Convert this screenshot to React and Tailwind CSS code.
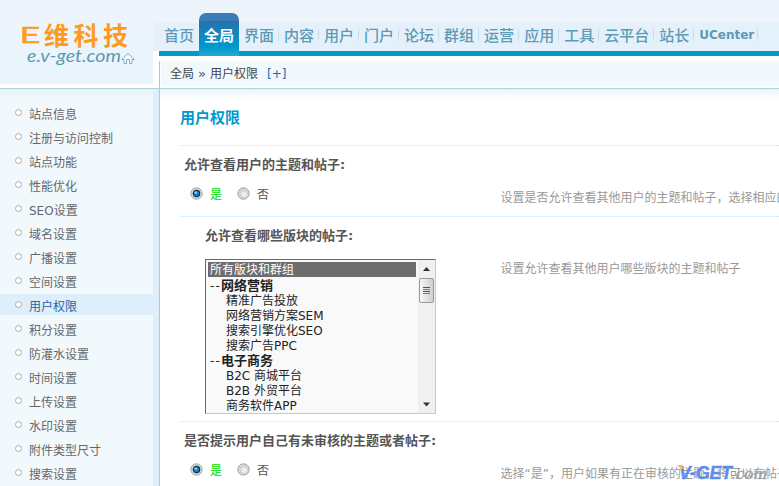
import React from 'react';

const NAV = ['首页', '全局', '界面', '内容', '用户', '门户', '论坛', '群组', '运营', '应用', '工具', '云平台', '站长'];

const MENU = [
  '站点信息', '注册与访问控制', '站点功能', '性能优化', 'SEO设置', '域名设置', '广播设置', '空间设置',
  '用户权限', '积分设置', '防灌水设置', '时间设置', '上传设置', '水印设置', '附件类型尺寸', '搜索设置',
];

const FORUMS = [
  { group: '网络营销' },
  { name: '精准广告投放' },
  { name: '网络营销方案SEM' },
  { name: '搜索引擎优化SEO' },
  { name: '搜索广告PPC' },
  { group: '电子商务' },
  { name: 'B2C 商城平台' },
  { name: 'B2B 外贸平台' },
  { name: '商务软件APP' },
];

function Logo() {
  return (
    <svg className="block h-[61px] w-[153px] overflow-visible" viewBox="0 0 153 61">
      <g fill="#ff9a1f" fontFamily="'Noto Sans CJK SC', sans-serif">
        <text transform="translate(19 20) scale(1.7 1)" fontSize="22" fontWeight="400" stroke="#ff9a1f" strokeWidth="0.4">E</text>
        <text x="44" y="22" fontSize="25" fontWeight="700" textLength="84" lengthAdjust="spacing">维科技</text>
      </g>
      <text x="27" y="38.5" fontSize="17" fontStyle="italic" fill="#5a9ab0" textLength="94" lengthAdjust="spacingAndGlyphs" fontFamily="Lato, sans-serif">e.v-get.com</text>
      <path d="M121.500 36.500 L128 30.500 L134.500 36.500 H132 V40.500 H129.500 V36.500 H126.500 V40.500 H124 V36.500 Z" fill="#f4fafd" stroke="#7fafc2" strokeWidth="1" />
    </svg>
  );
}

function Radio({ checked }) {
  return (
    <svg className="block size-[13px]" viewBox="0 0 13 13">
      <circle cx="6.5" cy="6.5" r="5.6" fill="#f4f4f4" stroke="#8e8f8f" strokeWidth="1" />
      <circle cx="6.5" cy="6.5" r="4" fill="#d9dbdd" stroke="#b9bcc0" strokeWidth="0.7" />
      {checked ? (
        <>
          <circle cx="6.5" cy="6.5" r="3.2" fill="#1580bd" stroke="#0d2f4c" strokeWidth="1.1" />
          <circle cx="5.8" cy="5.6" r="1.2" fill="#8bdcfa" />
        </>
      ) : (
        <circle cx="7.2" cy="7.3" r="2.6" fill="#eeeeee" />
      )}
    </svg>
  );
}

function YesNo() {
  return (
    <div className="flex h-4 items-start pl-[9px] leading-4">
      <Radio checked />
      <span className="ml-[7px] w-[27px] text-[#00dd00]">是</span>
      <Radio />
      <span className="ml-[7px]">否</span>
    </div>
  );
}

function ForumSelect() {
  return (
    <div className="ml-[25px] flex h-[155px] w-[231px] border border-t-[#696969] border-l-[#696969] border-r-[#c8c8c8] border-b-[#c8c8c8] bg-[#f9f9f9] text-[#222]">
      <div className="w-[212px] overflow-hidden pt-[2px] pl-[2px] leading-[18px]">
        <div className="h-[15px] w-[208px] bg-[#6d6d6d] pl-[2px] leading-[17px] text-white">所有版块和群组</div>
        {FORUMS.map((f) =>
          f.group ? (
            <div key={f.group} className="flex h-[15px] pl-[2px]">
              <span className="w-[11px] tracking-[1.2px] whitespace-nowrap">--</span>
              <b className="text-[13px] leading-[17px]">{f.group}</b>
            </div>
          ) : (
            <div key={f.name} className="h-[15px] pl-[18px] whitespace-pre">{f.name}</div>
          )
        )}
      </div>
      <div className="flex w-[17px] flex-col items-center bg-[#f0f0f0]">
        <svg className="h-[18px] w-[17px] shrink-0" viewBox="0 0 17 18"><path d="M5 11 L8.5 7 L12 11 Z" fill="#333" /></svg>
        <div className="flex h-[25px] w-[15px] shrink-0 flex-col items-center justify-center gap-px rounded-[2px] border border-[#999] bg-linear-to-r from-[#f8f8f8] to-[#cfcfd2]">
          <i className="h-px w-[7px] bg-[#555]" />
          <i className="h-px w-[7px] bg-[#777]" />
          <i className="h-px w-[7px] bg-[#555]" />
          <i className="h-px w-[7px] bg-[#777]" />
        </div>
        <svg className="mt-auto h-[17px] w-[17px] shrink-0" viewBox="0 0 17 17"><path d="M5 6.5 L12 6.5 L8.5 10.5 Z" fill="#333" /></svg>
      </div>
    </div>
  );
}

function Heading({ children, className }) {
  return <h3 className={`text-[13px] font-bold leading-[18px] whitespace-nowrap ${className}`}>{children}</h3>;
}

function Dots() {
  return <div className="h-px w-full bg-[repeating-linear-gradient(90deg,#cfe8f7_0_1px,#f4fafd_1px_2px)]" />;
}

export default function App() {
  return (
    <div className="relative h-[486px] w-[779px] overflow-hidden bg-white font-['DejaVu_Sans','Noto_Sans_CJK_SC',sans-serif] text-[12px] text-[#555]">
      <header className="flex h-[88px] flex-col">
        <div className="h-[23px] shrink-0 bg-[#edf4fc]" />
        <div className="flex h-[65px]">
          <div className="h-[61px] w-[153px] shrink-0 bg-linear-to-b from-[#edf5fc] to-[#e9f4fb]">
            <Logo />
          </div>
          <div className="flex w-[626px] flex-col">
            <nav className="flex h-[28px] shrink-0 bg-[#e5f1fa] pl-[6px]">
              {NAV.map((n) =>
                n === '全局' ? (
                  <div key={n} className="-mt-[10px] h-[43px] w-10 shrink-0 rounded-t-[7px] bg-[linear-gradient(#3b7cb7_0,#3b7cb7_8px,#2372b0_8px,#0099cc_34px,#2ba6d3_43px)] pt-[11px] pl-[5px] text-[15px] font-bold leading-[24px] whitespace-nowrap text-white">
                    {n}
                  </div>
                ) : (
                  <div key={n} className="flex shrink-0 pl-[5px] text-[15px] leading-[26px] whitespace-nowrap text-[#5c9ab5]">
                    <span className="font-medium">{n}</span>
                    <i className={`mt-[2px] ml-[4px] h-[19px] w-px ${n === '首页' ? '' : 'bg-linear-to-b from-[#e5f1fa] via-[#bcd8e6] to-[#e5f1fa]'}`} />
                  </div>
                )
              )}
              <div className="flex pl-[5px] text-[12px] font-bold leading-[24px] text-[#5c9ab5]">
                <span className="w-[55px]">UCenter</span>
                <i className="mt-[2px] ml-[3px] h-[19px] w-px bg-linear-to-b from-[#e5f1fa] via-[#bcd8e6] to-[#e5f1fa]" />
              </div>
            </nav>
            <div className="ml-[6px] h-[5px] shrink-0 bg-[linear-gradient(90deg,#0099cc_40px,transparent_40px,transparent_80px,#0099cc_80px)]" />
            <div className="ml-[6px] mt-[5px] flex h-[27px] border-l border-[#a9cbd9]">
              <div className="ml-px flex h-[25px] grow items-center bg-[#f2f9fd] pt-px pl-[9px] text-[#444]">
                <span>全局</span>
                <span className="w-[16px] text-center text-[13px] text-[#555]">»</span>
                <span>用户权限</span>
                <span className="ml-[9px] text-[#2366a8]">[+]</span>
              </div>
            </div>
          </div>
        </div>
      </header>
      <div className="h-px bg-[#aecfdc]" />
      <div className="flex h-[397px]">
        <aside className="w-[153px] shrink-0 bg-[linear-gradient(#e6f2fb,#f2f9fd_10px)] pt-[13px]">
          {MENU.map((m) => (
            <div key={m} className="h-6">
              <div className={`flex h-[21px] w-full pl-[15px] ${m === '用户权限' ? 'bg-[#deeefa] text-[#2366a8]' : 'text-[#666]'}`}>
                <i className="mt-[7px] size-[7px] rounded-full border border-[#aaa] bg-white" />
                <span className="ml-[7px] pt-[3px] leading-[21px]">{m}</span>
              </div>
            </div>
          ))}
        </aside>
        <div className="w-[7px] shrink-0 border-r border-[#a9cbd9] bg-[#deeefa]" />
        <main className="flex w-[619px] flex-col bg-[linear-gradient(#e7f4fc,#ffffff_10px)] pl-5">
          <h2 className="h-[56px] shrink-0 pt-[19px] text-[15px] leading-[21px] font-bold text-[#0099cc]">用户权限</h2>
          <Dots />
          <div className="flex h-[70px] shrink-0">
            <div className="w-[320.5px] shrink-0 pt-[10px] pl-[4px]">
              <Heading className="mb-[13px]">允许查看用户的主题和帖子:</Heading>
              <div className="-ml-[3px]"><YesNo /></div>
            </div>
            <p className="pt-[44px] leading-4 whitespace-nowrap text-[#999]">设置是否允许查看其他用户的主题和帖子，选择相应的选项</p>
          </div>
          <Dots />
          <div className="flex h-[204px] shrink-0">
            <div className="w-[320.5px] shrink-0 pt-[10px]">
              <Heading className="mb-[14px] pl-[25px]">允许查看哪些版块的帖子:</Heading>
              <ForumSelect />
            </div>
            <p className="pt-[44px] leading-4 whitespace-nowrap text-[#999]">设置允许查看其他用户哪些版块的主题和帖子</p>
          </div>
          <Dots />
          <div className="flex h-[64px] shrink-0">
            <div className="w-[320.5px] shrink-0 pt-[10px] pl-[4px]">
              <Heading className="mb-[13px]">是否提示用户自己有未审核的主题或者帖子:</Heading>
              <div className="-ml-[3px]"><YesNo /></div>
            </div>
            <p className="pt-[44px] leading-4 whitespace-nowrap text-[#999]">选择“是”，用户如果有正在审核的主题，将可以在帖子列表</p>
          </div>
        </main>
      </div>
      <svg className="absolute top-[460px] left-[676px] h-[24px] w-[94px]" viewBox="0 0 94 24">
        <text x="3" y="19" fontSize="18" fontWeight="700" fontStyle="italic" fill="#5b8def" stroke="#5b8def" strokeWidth="0.4" textLength="53" lengthAdjust="spacingAndGlyphs" fontFamily="'Liberation Sans', sans-serif">V-GET</text>
        <text x="55" y="19" fontSize="17" fontStyle="italic" fill="#a3a3a3" stroke="#a3a3a3" strokeWidth="0.4" textLength="36" lengthAdjust="spacingAndGlyphs" fontFamily="'Liberation Serif', serif">.com</text>
        <path d="M1 5 L6 5 L7 9 L4.500 9 Z" fill="#ffbd59" />
      </svg>
    </div>
  );
}
